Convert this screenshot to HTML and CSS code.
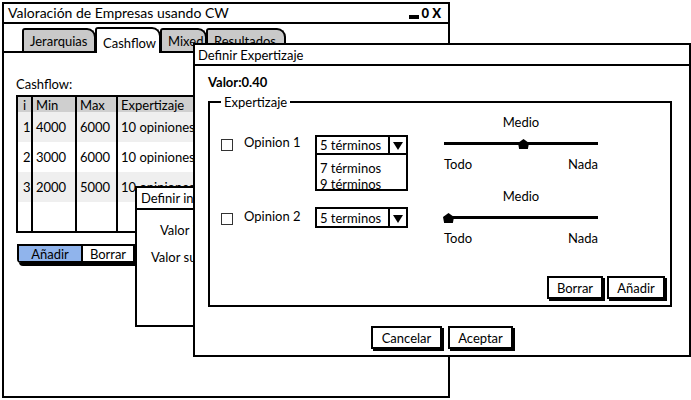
FILE: index.html
```html
<!DOCTYPE html>
<html lang="es">
<head>
  <meta charset="UTF-8">
  <title>Valoración de Empresas usando CW</title>
  <link rel="stylesheet" href="styles.css">
</head>
<body>
  <div class="desk">
    <!-- main application window -->
    <div class="win main-win">
      <div class="titlebar">
        <span>Valoración de Empresas usando CW</span>
        <span class="controls"><span class="min-ico"></span><span class="max-ico">0</span><span class="close-ico">X</span></span>
      </div>
      <div class="tabs">
        <div class="tab tab-jer">Jerarquias</div>
        <div class="tab tab-cash active">Cashflow</div>
        <div class="tab tab-mix">Mixed</div>
        <div class="tab tab-res">Resultados</div>
      </div>
      <div class="tab-body">
        <div class="section-label">Cashflow:</div>
        <div class="grid">
          <div class="row head">
            <div class="cell c-i">i</div><div class="cell c-min">Min</div><div class="cell c-max">Max</div><div class="cell c-exp">Expertizaje</div>
          </div>
          <div class="row alt">
            <div class="cell c-i">1</div><div class="cell c-min">4000</div><div class="cell c-max">6000</div><div class="cell c-exp">10 opiniones</div>
          </div>
          <div class="row">
            <div class="cell c-i">2</div><div class="cell c-min">3000</div><div class="cell c-max">6000</div><div class="cell c-exp">10 opiniones</div>
          </div>
          <div class="row alt">
            <div class="cell c-i">3</div><div class="cell c-min">2000</div><div class="cell c-max">5000</div><div class="cell c-exp">10 opiniones</div>
          </div>
          <div class="row last">
            <div class="cell c-i"></div><div class="cell c-min"></div><div class="cell c-max"></div><div class="cell c-exp"></div>
          </div>
        </div>
        <div class="seg">
          <span class="seg-btn on">Añadir</span><span class="seg-btn">Borrar</span>
        </div>
      </div>
    </div>

    <!-- second dialog, partly hidden -->
    <div class="win small-dlg">
      <div class="dlg-title">Definir intervalo</div>
      <div class="small-body">
        <div class="lbl lbl-1">Valor inferior</div>
        <div class="lbl lbl-2">Valor superior</div>
      </div>
    </div>

    <!-- front dialog -->
    <div class="win dlg">
      <div class="dlg-title">Definir Expertizaje</div>
      <div class="dlg-body">
        <div class="valor">Valor:0.40</div>
        <div class="group">
          <span class="legend">Expertizaje</span>

          <div class="op-row">
            <span class="chk"></span>
            <span class="op-label">Opinion 1</span>
            <div class="combo">
              <span class="combo-text">5 términos</span>
              <span class="combo-arrow"><span class="tri"></span></span>
              <div class="combo-list">
                <div>7 términos</div>
                <div>9 términos</div>
              </div>
            </div>
            <div class="slider">
              <div class="slider-top">Medio</div>
              <div class="track"><span class="thumb thumb-mid"></span></div>
              <div class="slider-ends"><span>Todo</span><span>Nada</span></div>
            </div>
          </div>

          <div class="op-row second">
            <span class="chk"></span>
            <span class="op-label">Opinion 2</span>
            <div class="combo">
              <span class="combo-text">5 terminos</span>
              <span class="combo-arrow"><span class="tri"></span></span>
            </div>
            <div class="slider">
              <div class="slider-top">Medio</div>
              <div class="track"><span class="thumb thumb-start"></span></div>
              <div class="slider-ends"><span>Todo</span><span>Nada</span></div>
            </div>
          </div>

          <div class="group-btns">
            <span class="button btn-borrar">Borrar</span>
            <span class="button btn-anadir">Añadir</span>
          </div>
        </div>
        <div class="dlg-btns">
          <span class="button btn-cancel">Cancelar</span>
          <span class="button btn-ok">Aceptar</span>
        </div>
      </div>
    </div>
  </div>
</body>
</html>
```

FILE: styles.css
```css
body {
  margin: 0;
  padding: 0;
  background-color: #fff;
  color: #000;
  font-family: 'Lato', 'Liberation Sans', sans-serif;
  font-size: 13px;
  line-height: 16px;
}
.desk {
  position: relative;
  width: 691px;
  height: 400px;
  overflow: hidden;
}
.win {
  box-sizing: border-box;
  border: 2px solid #000;
  background-color: #fff;
}
.main-win {
  margin: 2px;
  width: 448px;
  height: 396px;
}
.titlebar {
  box-sizing: border-box;
  height: 20px;
  border-bottom: 2px solid #000;
  padding: 0 7px 0 4px;
  display: flex;
  justify-content: space-between;
  align-items: center;
  font-size: 14px;
}
.controls {
  display: flex;
  align-items: center;
  gap: 3px;
  font-weight: 900;
  font-size: 13px;
}
.min-ico {
  width: 10px;
  height: 4px;
  background-color: #000;
  margin-top: 7px;
}
.tabs {
  box-sizing: border-box;
  height: 29px;
  padding-left: 18px;
  border-bottom: 2px solid #000;
  display: flex;
  align-items: flex-end;
}
.tab {
  box-sizing: border-box;
  height: 23px;
  border: 2px solid #000;
  border-bottom: none;
  border-radius: 3px 9px 0 0;
  background-color: #c9c9c9;
  display: flex;
  align-items: center;
  padding-left: 6px;
  margin-right: -1px;
}
.tab.active {
  height: 26px;
  margin-bottom: -2px;
  background-color: #fff;
  padding-top: 3px;
  position: relative;
}
.tab-jer { width: 74px; }
.tab-cash { width: 66px; }
.tab-mix { width: 47px; }
.tab-res { width: 80px; }
.tab-body {
  padding: 23px 0 0 12px;
}
.section-label {
  height: 16px;
}
.grid {
  margin-top: 3px;
  width: 220px;
  border: 2px solid #000;
}
.row {
  display: flex;
  height: 30px;
}
.row.head {
  height: 15px;
  background-color: #cfcfcf;
}
.row.alt {
  background-color: #efefef;
}
.row.last {
  height: 29px;
}
.cell {
  box-sizing: border-box;
  border-left: 2px solid #000;
  display: flex;
  align-items: center;
  padding-left: 3px;
  white-space: nowrap;
  overflow: hidden;
}
.c-i {
  width: 13px;
  border-left: none;
  padding-left: 5px;
}
.c-min { width: 44px; }
.c-max { width: 41px; }
.c-exp { flex: 1; }
.seg {
  margin: 11px 0 0 1px;
  width: 118px;
  height: 19px;
  box-sizing: border-box;
  border: 2px solid #000;
  display: flex;
  box-shadow: 2px 3px 0 #000;
  border-radius: 0 0 0 4px;
}
.seg-btn {
  box-sizing: border-box;
  display: flex;
  align-items: center;
  justify-content: center;
}
.seg-btn.on {
  width: 64px;
  background-color: #90b4ec;
  border-right: 2px solid #000;
}
.seg-btn + .seg-btn {
  flex: 1;
}
.small-dlg {
  position: absolute;
  left: 135px;
  top: 186px;
  width: 100px;
  height: 141px;
}
.dlg-title {
  box-sizing: border-box;
  height: 22px;
  border-bottom: 2px solid #000;
  padding-left: 4px;
  display: flex;
  align-items: center;
  white-space: nowrap;
}
.small-body {
  padding-top: 12px;
}
.lbl {
  white-space: nowrap;
  height: 16px;
}
.lbl-1 {
  padding-left: 23px;
}
.lbl-2 {
  margin-top: 11px;
  padding-left: 14px;
}
.dlg {
  position: absolute;
  left: 193px;
  top: 43px;
  width: 498px;
  height: 314px;
}
.dlg .dlg-title {
  height: 21px;
  padding-left: 3px;
}
.dlg-body {
  padding: 8px 0 0 13px;
}
.valor {
  font-weight: 700;
  height: 16px;
}
.group {
  position: relative;
  box-sizing: border-box;
  margin-top: 11px;
  width: 464px;
  height: 206px;
  border: 2px solid #000;
  padding-top: 11px;
}
.legend {
  position: absolute;
  top: -9px;
  left: 11px;
  padding: 0 3px;
  background-color: #fff;
}
.op-row {
  display: flex;
  align-items: flex-start;
}
.op-row.second {
  margin-top: 16px;
}
.chk {
  box-sizing: border-box;
  width: 12px;
  height: 12px;
  border: 1.5px solid #333;
  margin: 25px 0 0 11px;
}
.op-label {
  margin: 20px 0 0 11px;
  width: 71px;
}
.combo {
  position: relative;
  box-sizing: border-box;
  margin-top: 21px;
  width: 93px;
  height: 20px;
  border: 2px solid #000;
  display: flex;
}
.second .combo {
  margin-top: 19px;
  height: 21px;
}
.combo-text {
  flex: 1;
  padding-left: 3px;
  display: flex;
  align-items: center;
}
.combo-arrow {
  width: 16px;
  border-left: 2px solid #000;
  display: flex;
  align-items: center;
  justify-content: center;
}
.tri {
  width: 0;
  height: 0;
  border-left: 5px solid transparent;
  border-right: 5px solid transparent;
  border-top: 8px solid #000;
  margin-top: 2px;
}
.combo-list {
  position: absolute;
  left: -2px;
  top: 100%;
  box-sizing: border-box;
  width: 93px;
  height: 38px;
  border: 2px solid #000;
  background-color: #fff;
  padding: 5px 0 0 3px;
  z-index: 2;
}
.slider {
  margin-left: 36px;
  width: 154px;
}
.slider-top {
  height: 16px;
  text-align: center;
}
.track {
  position: relative;
  margin-top: 7px;
  height: 12px;
}
.track::before {
  content: "";
  position: absolute;
  left: 0;
  right: 0;
  top: 5px;
  height: 3px;
  background-color: #000;
}
.thumb {
  position: absolute;
  top: 2px;
  width: 11px;
  height: 10px;
  background-color: #000;
  clip-path: polygon(50% 0, 100% 40%, 90% 100%, 10% 100%, 0 40%);
}
.thumb-mid { left: 74px; }
.thumb-start { left: -1px; }
.slider-ends {
  margin-top: 7px;
  display: flex;
  justify-content: space-between;
}
.group-btns {
  margin-top: 30px;
  padding-right: 5px;
  display: flex;
  justify-content: flex-end;
  gap: 4px;
}
.button {
  box-sizing: border-box;
  height: 23px;
  border: 2px solid #000;
  background-color: #fff;
  box-shadow: 2px 2px 0 #000;
  display: flex;
  align-items: center;
  justify-content: center;
}
.btn-borrar { width: 56px; }
.btn-anadir { width: 58px; }
.dlg-btns {
  margin: 19px 13px 0 0;
  display: flex;
  justify-content: center;
  gap: 6px;
}
.btn-cancel { width: 71px; }
.btn-ok { width: 65px; }
```
